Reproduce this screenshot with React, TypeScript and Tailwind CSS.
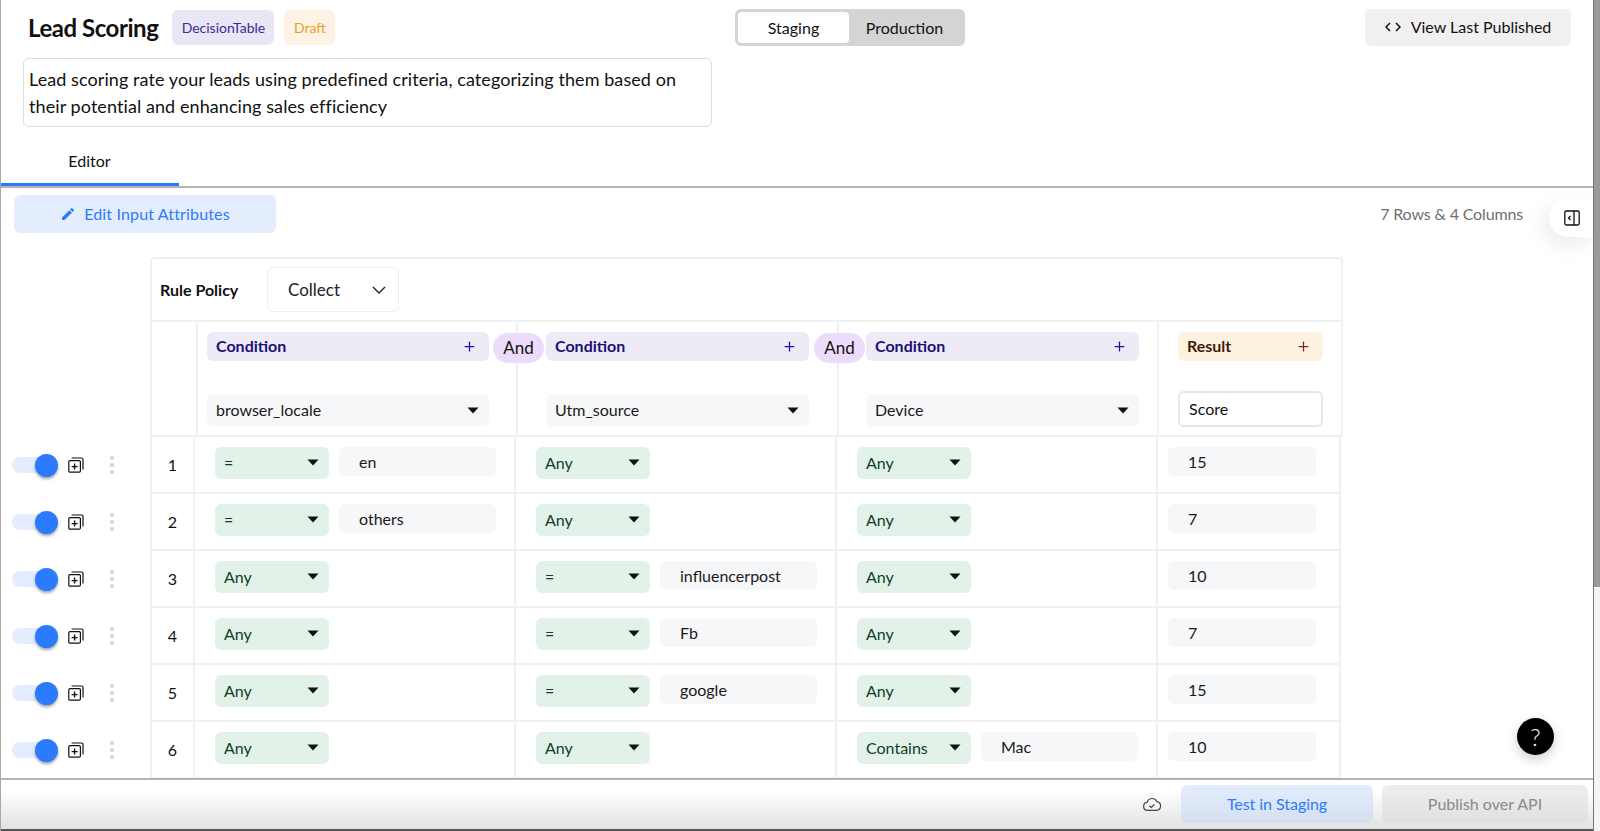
import React from 'react'
import { Plus } from 'lucide-react'

type Cell = { op: string; value?: string }
type Row = { id: number; cells: Cell[]; score: string }

const rows: Row[] = [
  { id: 1, cells: [{ op: '=', value: 'en' }, { op: 'Any' }, { op: 'Any' }], score: '15' },
  { id: 2, cells: [{ op: '=', value: 'others' }, { op: 'Any' }, { op: 'Any' }], score: '7' },
  { id: 3, cells: [{ op: 'Any' }, { op: '=', value: 'influencerpost' }, { op: 'Any' }], score: '10' },
  { id: 4, cells: [{ op: 'Any' }, { op: '=', value: 'Fb' }, { op: 'Any' }], score: '7' },
  { id: 5, cells: [{ op: 'Any' }, { op: '=', value: 'google' }, { op: 'Any' }], score: '15' },
  { id: 6, cells: [{ op: 'Any' }, { op: 'Any' }, { op: 'Contains', value: 'Mac' }], score: '10' },
]

function Caret() {
  return (
    <svg width="12" height="7" viewBox="0 0 12 7" className="shrink-0">
      <path d="M0.5 0.5h11L6 6.5z" fill="#111" />
    </svg>
  )
}

function CopyPlus() {
  return (
    <svg width="16" height="16" viewBox="0 0 16 16" fill="none" stroke="#111" strokeWidth="1.2">
      <rect x="0.8" y="3.6" width="11.6" height="11.6" rx="1.2" />
      <path d="M3.6 1h10a1.4 1.4 0 0 1 1.4 1.4v10" />
      <path d="M6.6 6.6v6M3.6 9.6h6" strokeWidth="1.4" />
    </svg>
  )
}

function RowControls() {
  return (
    <div className="flex w-[150px] shrink-0 items-center pb-[1px] pl-3">
      <div className="relative h-4 w-[34px] rounded-full bg-[#e3edfd]">
        <div className="absolute left-[23px] top-[-3px] h-[23px] w-[23px] rounded-full bg-[#2b7bff] shadow-[0_2px_3px_rgba(0,0,0,0.35)]" />
      </div>
      <div className="ml-[22px]">
        <CopyPlus />
      </div>
      <div className="ml-[26px] flex flex-col gap-[3px]">
        <span className="h-1 w-1 rounded-full bg-[#d4d4d4]" />
        <span className="h-1 w-1 rounded-full bg-[#d4d4d4]" />
        <span className="h-1 w-1 rounded-full bg-[#d4d4d4]" />
      </div>
    </div>
  )
}

function ValueBox({ text, width }: { text: string; width: string }) {
  return (
    <div className={`flex h-[29px] items-center rounded-md bg-[#f6f7f9] pl-5 text-base text-[#1a1a1a] ${width}`}>
      {text}
    </div>
  )
}

function RuleCell({ cell }: { cell: Cell }) {
  return (
    <div className="flex w-[321px] items-start gap-[10px] border-r-2 border-[#f0f0f0] pl-5 pt-[10px]">
      <div className="flex h-8 w-[114px] items-center justify-between rounded-md bg-[#e3f2e8] pb-[1px] pl-[9px] pr-[10px] text-base text-[#0f3d2a]">
        <span>{cell.op}</span>
        <Caret />
      </div>
      {cell.value && <ValueBox text={cell.value} width="w-[157px]" />}
    </div>
  )
}

function ConditionHead({ name, cell, pad, width }: { name: string; cell: string; pad: string; width: string }) {
  return (
    <div className={`h-full border-r-2 border-[#f0f0f0] pt-[10px] ${cell} ${pad}`}>
      <div className={`flex h-[29px] items-center justify-between rounded-md bg-[#eeebf7] pb-[1px] pl-[9px] pr-3 ${width}`}>
        <span className="text-base font-bold text-[#1c1077]">Condition</span>
        <Plus size={15} strokeWidth={2} className="text-[#1c10a0]" />
      </div>
      <div className={`mt-[33px] flex h-8 items-center justify-between rounded-md bg-[#f6f7f9] pl-[9px] pr-[10px] text-base text-[#1a1a1a] ${width}`}>
        <span>{name}</span>
        <Caret />
      </div>
    </div>
  )
}

function AndPill({ left }: { left: string }) {
  return (
    <div className={`absolute top-[11px] flex h-[30px] w-[51px] items-center justify-center rounded-full bg-[#ecdcfb] text-[17px] text-[#111] ${left}`}>
      And
    </div>
  )
}

export default function App() {
  return (
    <div className="relative h-[831px] w-[1600px] overflow-hidden bg-white font-['Lato','Liberation_Sans',sans-serif] text-[#111]">
      {/* header */}
      <div className="h-[188px] border-b-2 border-[#b4b4b4]">
        <div className="flex pt-[9px]">
          <div className="flex h-[37px] w-[735px] items-center pl-7">
            <h1 className="text-2xl font-bold tracking-[-0.45px] text-[#111]">Lead Scoring</h1>
            <span className="ml-[14px] flex h-[35px] w-[102px] items-center justify-center rounded-md bg-[#e9e6f5] text-sm text-[#3b2a9a]">
              DecisionTable
            </span>
            <span className="ml-[10px] flex h-[35px] w-[51px] items-center justify-center rounded-md bg-[#fdf2e3] text-sm text-[#eda01f]">
              Draft
            </span>
          </div>
          <div className="flex h-[37px] w-[230px] items-center rounded-md bg-[#d4d4d4] p-[3px] text-base">
            <div className="flex h-full w-[111px] items-center justify-center rounded bg-white">Staging</div>
            <div className="flex-1 pr-[2px] text-center">Production</div>
          </div>
          <div className="ml-auto mr-[29px] flex h-[37px] w-[206px] items-center justify-center gap-[10px] rounded-md bg-[#f0f0f0] pb-[1px] text-base">
            <svg width="16" height="10" viewBox="0 0 16 10" fill="none" stroke="#111" strokeWidth="1.5">
              <path d="M5 1 1 5l4 4M11 1l4 4-4 4" />
            </svg>
            View Last Published
          </div>
        </div>
        <div className="ml-[23px] mt-3 h-[69px] w-[689px] rounded-md border border-[#dcdcdc] pb-[5px] pl-[5px] pr-2 pt-[7px] text-lg leading-[27px] tracking-[0.08px] text-[#111]">
          Lead scoring rate your leads using predefined criteria, categorizing them based on their potential and enhancing sales efficiency
        </div>
        <div className="mt-[14px] flex h-[45px] w-[179px] items-center justify-center border-b-[3px] border-[#2b7bff] pb-[3px] text-base">
          Editor
        </div>
      </div>

      {/* toolbar */}
      <div className="flex items-start pl-[14px] pt-[7px]">
        <button className="flex h-[38px] w-[262px] items-center justify-center gap-2 rounded-md bg-[#e3edfd] text-base tracking-[0.15px] text-[#2b7bff]">
          <svg width="16" height="16" viewBox="0 0 24 24" fill="#2b7bff">
            <path d="M3 17.25V21h3.75L17.81 9.94l-3.75-3.75L3 17.25zM20.71 7.04a1 1 0 0 0 0-1.41l-2.34-2.34a1 1 0 0 0-1.41 0l-1.83 1.83 3.75 3.75 1.83-1.83z" />
          </svg>
          Edit Input Attributes
        </button>
        <span className="ml-auto mr-[77px] mt-[7px] text-base tracking-[-0.15px] text-[#6f6f6f]">7 Rows &amp; 4 Columns</span>
      </div>

      {/* rule policy */}
      <div className="ml-[150px] mt-6 flex h-[63px] w-[1193px] items-center rounded-t border-x-2 border-t-2 border-[#f0f0f0] pl-2">
        <span className="w-[107px] text-base font-bold text-[#111]">Rule Policy</span>
        <div className="flex h-[45px] w-[132px] items-center justify-between rounded-md border border-[#eeeeee] pl-5 pr-3 text-[17px] text-[#222]">
          Collect
          <svg width="14" height="8" viewBox="0 0 14 8" fill="none" stroke="#222" strokeWidth="1.4">
            <path d="M1 1l6 6 6-6" />
          </svg>
        </div>
      </div>

      {/* column heads */}
      <div className="relative ml-[150px] flex h-[117px] w-[1193px] border-x-2 border-y-2 border-[#f0f0f0]">
        <div className="h-full w-[46px] border-r-2 border-[#f0f0f0]" />
        <ConditionHead name="browser_locale" cell="w-[320px]" pad="pl-[9px]" width="w-[282px]" />
        <ConditionHead name="Utm_source" cell="w-[321px]" pad="pl-[28px]" width="w-[263px]" />
        <ConditionHead name="Device" cell="w-[320px]" pad="pl-[27px]" width="w-[273px]" />
        <AndPill left="left-[341px]" />
        <AndPill left="left-[662px]" />
        <div className="h-full flex-1 pl-[19px] pt-[10px]">
          <div className="flex h-[29px] w-[145px] items-center justify-between rounded-md bg-[#fdf1df] pb-[1px] pl-[9px] pr-3">
            <span className="text-base font-bold text-[#3f1d0c]">Result</span>
            <Plus size={15} strokeWidth={2} className="text-[#7a2a10]" />
          </div>
          <div className="mt-[30px] flex h-9 w-[145px] items-center rounded-md border-2 border-[#e5e7eb] pl-[9px] text-base">
            Score
          </div>
        </div>
      </div>

      {/* rule rows */}
      {rows.map((row) => (
        <div key={row.id} className="flex h-[57px]">
          <RowControls />
          <div className="flex w-[1191px] border-b-2 border-l-2 border-[#f0f0f0]">
            <div className="flex w-[43px] items-center justify-center border-r-2 border-[#f0f0f0] text-base">{row.id}</div>
            {row.cells.map((cell, i) => (
              <RuleCell key={i} cell={cell} />
            ))}
            <div className="flex-1 border-r-2 border-[#f0f0f0] pl-[10px] pt-[10px]">
              <ValueBox text={row.score} width="w-[148px]" />
            </div>
          </div>
        </div>
      ))}

      {/* footer */}
      <div className="absolute inset-x-0 bottom-0 flex h-[53px] items-start justify-end border-y-2 border-t-[#b4b4b4] border-b-[#555] bg-gradient-to-b from-white from-20% to-[#e2e2e2] pr-3 pt-[5px]">
        <svg width="20" height="16" viewBox="0 0 24 20" fill="none" stroke="#444" strokeWidth="1.5" className="mr-[19px] mt-[11px]">
          <path d="M6.5 18a5 5 0 0 1-.6-9.96A6.5 6.5 0 0 1 18.2 7.1 5.5 5.5 0 0 1 17.5 18Z" />
          <path d="M8.8 12.2l2.2 2.2 4-4" />
        </svg>
        <button className="flex h-[38px] w-[192px] items-center justify-center rounded-md bg-gradient-to-b from-[#e4edfd] to-[#d5dff0] text-base tracking-[-0.05px] text-[#2b7bff]">
          Test in Staging
        </button>
        <button className="ml-[9px] flex h-[38px] w-[206px] items-center justify-center rounded-md bg-gradient-to-b from-[#eeeeee] to-[#e0e0e2] text-base text-[#8a8a8a]">
          Publish over API
        </button>
      </div>

      {/* overlays */}
      <div className="absolute bottom-[76px] right-[46px] flex h-[37px] w-[37px] items-center justify-center rounded-full bg-black text-2xl font-light text-white shadow-[0_4px_12px_rgba(0,0,0,0.2)]">
        ?
      </div>
      <div className="absolute right-[6px] top-[198px] flex h-[39px] w-[45px] items-center justify-center rounded-l-full bg-white shadow-[-6px_8px_20px_rgba(0,0,0,0.08)]">
        <svg width="16" height="16" viewBox="0 0 16 16" fill="none" stroke="#111" strokeWidth="1.3">
          <rect x="0.8" y="1" width="14.4" height="14" rx="1.5" />
          <path d="M10 1v14M6.5 6 4.5 8l2 2" />
        </svg>
      </div>
      <div className="absolute inset-y-0 left-0 w-[1px] bg-[#a8a8a8]" />
      <div className="absolute bottom-0 right-0 top-0 w-[7px] border-l border-[#777] bg-[#f4f4f4]">
        <div className="h-[587px] w-full bg-[#9a9a9a]" />
      </div>
    </div>
  )
}
